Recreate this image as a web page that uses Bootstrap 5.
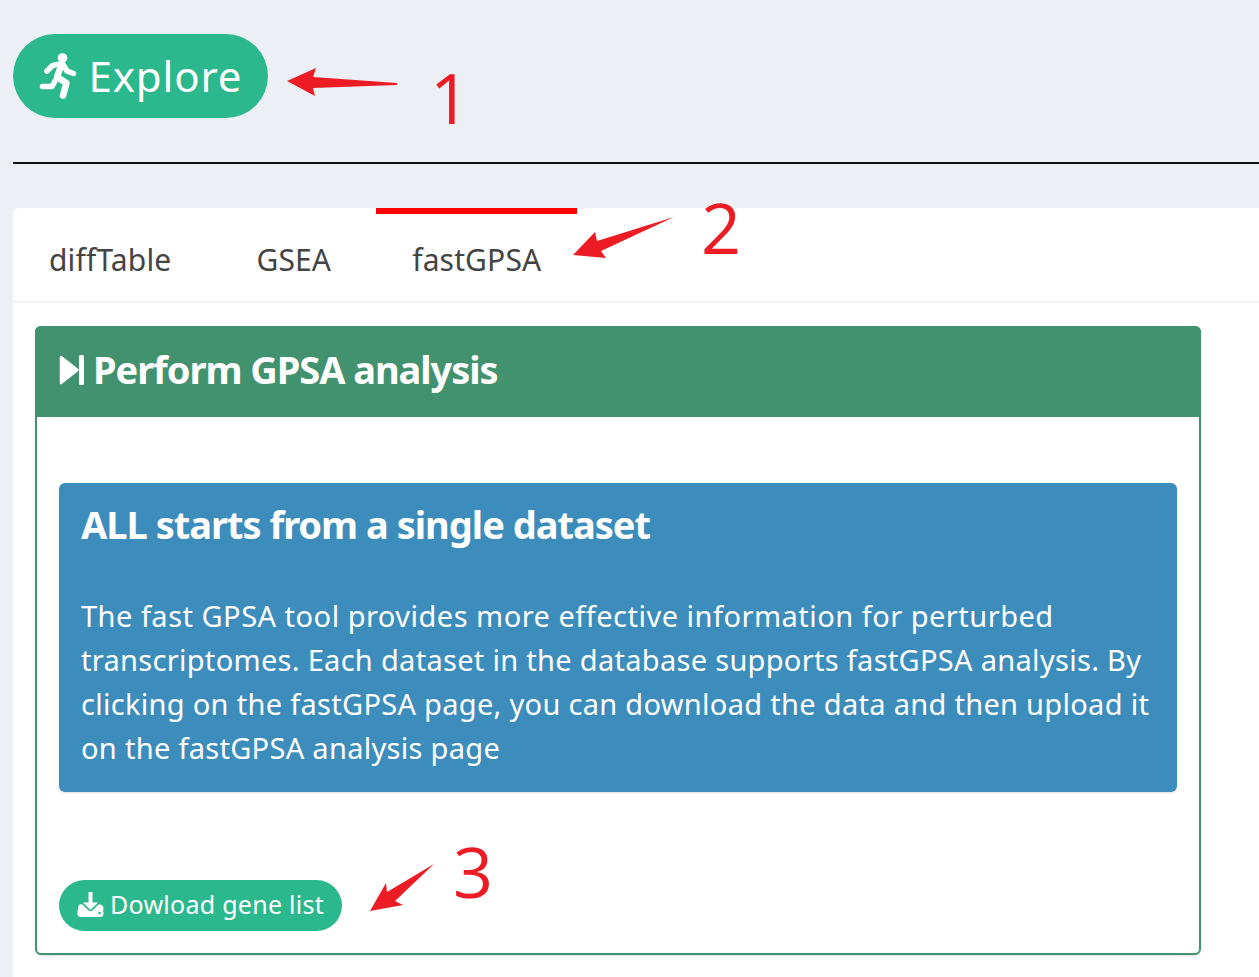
<!DOCTYPE html>
<html lang="en"><head><meta charset="utf-8"><title>Explore</title>
<link href="https://cdn.jsdelivr.net/npm/bootstrap@5.3.0/dist/css/bootstrap.min.css" rel="stylesheet">
<style>
html,body{height:977px;overflow:hidden}
body{background:#ecf0f5;font-family:"Noto Sans","Open Sans",sans-serif;color:#333;position:relative}
.page-wrap{padding:34px 0 0 13px}
.pill-btn{background:#2bb88c;color:#fff;border:0;border-radius:42px}
.pill-btn:hover{background:#2bb88c;color:#fff}
.explore-btn{width:255px;height:84px;font-size:42px;letter-spacing:.85px;gap:12px;padding:0 0 2px 0}
.explore-btn svg{width:38px;height:50px;margin-top:2px}
.rule{border-top:2px solid #111;opacity:1;margin:44px 0 44px}
.tabs-box{background:#fff;border-radius:6px 0 0 0;height:780px}
.tabs-row{height:95px;border-bottom:2px solid #f4f4f4}
.tab-item{font-size:30px;letter-spacing:.15px;color:#444;padding:4px 36px 0;height:100%;display:flex;align-items:center;border-top:6px solid transparent}
.tab-item.on{border-top-color:#f00}
.tab-one{margin-right:13px}
.tab-two{margin-right:9px}
.panel-area{padding:23px 0 0 22px}
.green-box{width:1166px;height:629px;border:2px solid #429270;border-radius:6px;background:#fff;box-shadow:0 1px 2px rgba(0,0,0,.12)}
.green-head{background:#429270;height:91px;margin:-2px -2px 0;border-radius:6px 6px 0 0;color:#fff;padding:0 0 4px 24px;font-size:38px;font-weight:700;letter-spacing:-1.05px;gap:8px}
.green-body{padding:66px 22px 0}
.blue-box{background:#3c8dbc;color:#fff;height:309px;border-radius:6px;padding:16px 22px;box-shadow:0 1px 2px rgba(0,0,0,.12)}
.blue-box h4{font-size:38px;font-weight:700;letter-spacing:-1px;margin:0 0 45px;line-height:50px}
.blue-box p{font-size:29px;line-height:44px;letter-spacing:.3px;margin:0;white-space:nowrap}
.first-line{letter-spacing:.49px}
.dl-btn{margin-top:88px;width:283px;height:51px;font-size:25px;letter-spacing:.27px;gap:6px;border-radius:26px;padding:0 0 2px}
.mark-layer{position:absolute;left:0;top:0;width:1259px;height:977px;pointer-events:none}
.mark-num{position:absolute;color:#ed1c24;font-family:"Open Sans",sans-serif;font-weight:400;font-size:70px;line-height:70px}
</style></head>
<body>
<div class="page-wrap">
  <button type="button" class="btn pill-btn explore-btn d-inline-flex align-items-center justify-content-center">
    <svg viewBox="39 50 38 50" fill="none" stroke="#fff" stroke-width="5.500" stroke-linecap="round" stroke-linejoin="round"><circle cx="62.500" cy="57" r="4.800" fill="#fff" stroke="none"/><path d="M47 70l5-5c3-1.500 7-2 11-1.500l4 6.500 6.500 2.500"/><path d="M61 65l-4 11 9.500 6-3.500 12.500" stroke-width="6.500"/><path d="M55 80l-3 5.500H42.500"/></svg>
    <span>Explore</span>
  </button>
  <hr class="rule">
  <div class="tabs-box">
    <div class="tabs-row d-flex">
      <div class="tab-item tab-one">diffTable</div>
      <div class="tab-item tab-two">GSEA</div>
      <div class="tab-item on">fastGPSA</div>
    </div>
    <div class="panel-area">
      <div class="green-box">
        <div class="green-head d-flex align-items-center">
          <svg width="26" height="30" viewBox="0 0 26 30" fill="#fff"><path d="M2 2L18.500 15 2 28z" stroke="#fff" stroke-width="2.500" stroke-linejoin="round"/><rect x="20" y="0" width="5" height="30" rx="1.500"/></svg>
          <span>Perform GPSA analysis</span>
        </div>
        <div class="green-body">
          <div class="blue-box">
            <h4>ALL starts from a single dataset</h4>
            <p><span class="first-line">The fast GPSA tool provides more effective information for perturbed</span><br>transcriptomes. Each dataset in the database supports fastGPSA analysis. By<br>clicking on the fastGPSA page, you can download the data and then upload it<br>on the fastGPSA analysis page</p>
          </div>
          <button type="button" class="btn pill-btn dl-btn d-flex align-items-center justify-content-center">
            <svg width="27" height="27" viewBox="0 0 27 27" fill="#fff"><path d="M11.500 1h4v10.500h5.500l-7.500 7.500-7.500-7.500h5.500z"/><path d="M4 13.500h1.500l6 6c1 1 3 1 4 0l6-6H23c2 0 3.500 2 3.500 3.500 0 1-.3 2-.5 3 .5 1 .5 2 .5 3 0 2-1.500 3-3.500 3H4c-2 0-3.500-1-3.500-3v-2.500c0-1 .5-2 1-3-1-1.500 .5-4.500 2.500-4.500z"/><circle cx="22.500" cy="22" r="1.300" fill="#2bb88c"/></svg>
            <span>Dowload gene list</span>
          </button>
        </div>
      </div>
    </div>
  </div>
</div>
<svg class="mark-layer" viewBox="0 0 1259 977" fill="#ed1c24">
  <path d="M287 81L316 68 313 77 397 83V85L313 88 315 96z"/>
  <path d="M573 255L595 232 597 241 674 217 601 251 606 258z"/>
  <path d="M370 911L386 883 387 892 434 864 395 901 403 905z"/>
</svg>
<span class="mark-num" style="left:430px;top:62px">1</span>
<span class="mark-num" style="left:701px;top:192px">2</span>
<span class="mark-num" style="left:453px;top:836px">3</span>
</body></html>
